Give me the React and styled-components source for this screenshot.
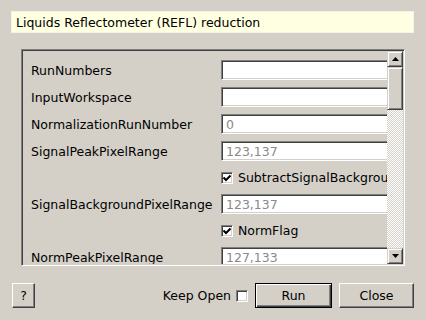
import React from "react";
import styled, { createGlobalStyle } from "styled-components";

const GlobalStyle = createGlobalStyle`
  html, body { margin: 0; padding: 0; background: #d4d0c8; }
  * { box-sizing: border-box; }
`;

const Window = styled.div`
  width: 426px; height: 320px; background: #d4d0c8;
  font-family: "DejaVu Sans", "Liberation Sans", sans-serif; font-size: 12.5px; color: #000;
  padding: 11px 12px 0 11px; display: flex; flex-direction: column;
`;

const Description = styled.div`
  height: 22px; background: #ffffe1; display: flex; align-items: center;
  padding: 1px 0 0 4px; border: 1px solid #f4f2ea;
`;

const ScrollFrame = styled.div`
  margin: 16px 9px 0 10px; height: 217px; display: flex;
  border: 1px solid; border-color: #808080 #fff #fff #808080;
  box-shadow: inset 1px 1px 0 #404040, inset -1px -1px 0 #d4d0c8;
  padding: 1px;
`;

const Viewport = styled.div`
  flex: 1; overflow: hidden; padding: 9px 0 0 8px;
`;

const Form = styled.div`
  display: grid; grid-template-columns: 190px 180px; row-gap: 7px; align-items: center;
`;

const Label = styled.div`
  height: 20px; display: flex; align-items: center; white-space: nowrap; padding-top: 1px;
`;

const Field = styled.div`
  height: 20px; background: #fff; padding: 1px 0 0 4px; display: flex; align-items: center;
  color: ${({ muted }) => (muted ? "#8a8a8a" : "#000")};
  border: 1px solid; border-color: #808080 #fff #fff #808080;
  box-shadow: inset 1px 1px 0 #404040, inset -1px -1px 0 #d4d0c8;
`;

const CheckRow = styled.label`
  grid-column: 2; height: 19px; display: flex; align-items: center; gap: 5px; white-space: nowrap;
`;

const Box = styled.span`
  width: 12px; height: 12px; flex: none; background: #fff; display: flex; align-items: center; justify-content: center;
  border: 1px solid; border-color: #808080 #fff #fff #808080;
  box-shadow: inset 1px 1px 0 #404040, inset -1px -1px 0 #d4d0c8;
`;

const ScrollBar = styled.div`
  width: 16px; flex: none; display: flex; flex-direction: column;
`;

const Raised = styled.div`
  background: #d4d0c8; display: flex; align-items: center; justify-content: center;
  border: 1px solid; border-color: #d4d0c8 #404040 #404040 #d4d0c8;
  box-shadow: inset 1px 1px 0 #fff, inset -1px -1px 0 #808080;
`;

const ArrowButton = styled(Raised)`
  height: 16px; flex: none;
`;

const Thumb = styled(Raised)`
  height: 43px; flex: none;
`;

const Track = styled.div`
  flex: 1;
  background: repeating-conic-gradient(#fff 0 25%, #d4d0c8 0 50%) 0 0 / 2px 2px;
`;

const Footer = styled.div`
  margin-top: 17px; display: flex; align-items: center; padding-left: 1px;
`;

const Button = styled.button`
  font: inherit; color: #000; height: 25px; width: ${({ w }) => w}px; padding: 0;
  background: #d4d0c8; margin-left: ${({ ml }) => ml || 0}px;
  border: 1px solid; border-color: ${({ primary }) => (primary ? "#000" : "#fff #404040 #404040 #fff")};
  box-shadow: ${({ primary }) =>
    primary
      ? "inset 1px 1px 0 #fff, inset -1px -1px 0 #404040, inset -2px -2px 0 #808080"
      : "inset -1px -1px 0 #808080"};
`;

const Spacer = styled.div`flex: 1;`;

const KeepOpen = styled.label`
  display: flex; align-items: center; gap: 5px; margin-right: 7px;
`;

const Tick = () => (
  <svg width="8" height="8" viewBox="0 0 8 8">
    <path d="M0.5 3.5 L3 6 L7.5 1.5" stroke="#000" strokeWidth="2" fill="none" />
  </svg>
);

const Arrow = ({ up }) => (
  <svg width="7" height="4" viewBox="0 0 7 4">
    <path d={up ? "M3.5 0 L7 4 L0 4 Z" : "M0 0 L7 0 L3.5 4 Z"} fill="#000" />
  </svg>
);

const rows = [
  { label: "RunNumbers", value: "" },
  { label: "InputWorkspace", value: "" },
  { label: "NormalizationRunNumber", value: "0" },
  { label: "SignalPeakPixelRange", value: "123,137" },
  { check: "SubtractSignalBackground" },
  { label: "SignalBackgroundPixelRange", value: "123,137" },
  { check: "NormFlag" },
  { label: "NormPeakPixelRange", value: "127,133" },
  { check: "SubtractNormBackground" },
];

export default function App() {
  return (
    <Window>
      <GlobalStyle />
      <Description>Liquids Reflectometer (REFL) reduction</Description>
      <ScrollFrame>
        <Viewport>
          <Form>
            {rows.map((r, i) =>
              r.check ? (
                <CheckRow key={i}>
                  <Box><Tick /></Box>
                  {r.check}
                </CheckRow>
              ) : (
                <React.Fragment key={i}>
                  <Label>{r.label}</Label>
                  <Field muted={!!r.value}>{r.value}</Field>
                </React.Fragment>
              )
            )}
          </Form>
        </Viewport>
        <ScrollBar>
          <ArrowButton><Arrow up /></ArrowButton>
          <Thumb />
          <Track />
          <ArrowButton><Arrow /></ArrowButton>
        </ScrollBar>
      </ScrollFrame>
      <Footer>
        <Button w={23}>?</Button>
        <Spacer />
        <KeepOpen>
          Keep Open
          <Box />
        </KeepOpen>
        <Button w={77} primary>Run</Button>
        <Button w={75} ml={7}>Close</Button>
      </Footer>
    </Window>
  );
}
